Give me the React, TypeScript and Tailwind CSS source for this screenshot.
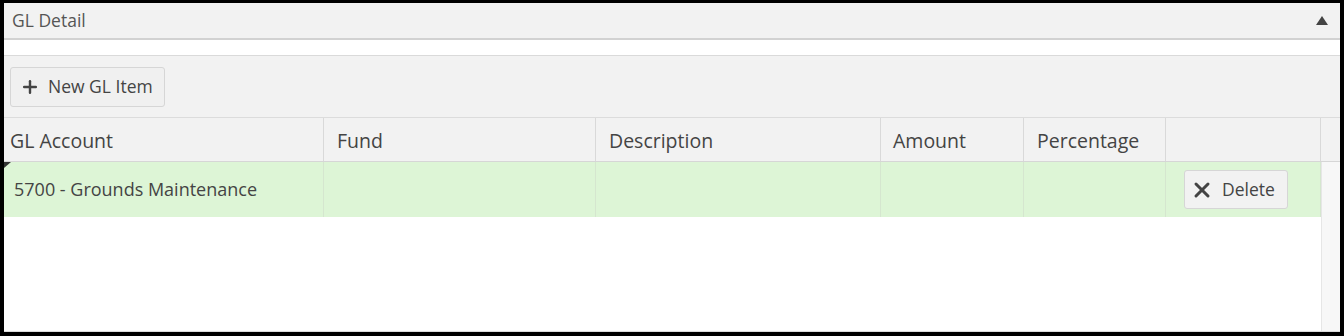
import { Plus, X } from 'lucide-react';

const columns = [
  { label: 'GL Account', width: 'w-[320px]', pad: 'pl-[6px]' },
  { label: 'Fund', width: 'w-[272px]', pad: 'pl-[13px]' },
  { label: 'Description', width: 'w-[285px]', pad: 'pl-[13px]' },
  { label: 'Amount', width: 'w-[143px]', pad: 'pl-[12px]' },
  { label: 'Percentage', width: 'w-[142px]', pad: 'pl-[13px]' },
  { label: '', width: 'w-[155px]', pad: 'pl-[13px]' },
];

export default function App() {
  return (
    <div className="h-[336px] w-[1344px] bg-black pt-[3px] pl-[4px] pr-[4px] pb-[4px] font-['Open_Sans',sans-serif]">
      <div className="flex h-full flex-col bg-white border-b border-[#dcdcdc]">
        {/* Panel header */}
        <div className="flex h-[37px] items-center justify-between border-b-2 border-[#d2d2d2] bg-[#f2f2f2] pl-[8px] pr-[12px]">
          <span className="text-[17.5px] text-[#555]">GL Detail</span>
          <svg viewBox="0 0 12 9" className="h-[9px] w-[12px]">
            <path d="M6 0 L12 9 L0 9 Z" fill="#444" />
          </svg>
        </div>

        <div className="h-[16px] border-b border-[#dadada] bg-white" />

        {/* Toolbar */}
        <div className="flex h-[62px] items-center border-b border-[#dcdcdc] bg-[#f2f2f2] pl-[6px]">
          <button className="flex h-[40px] items-center gap-[8px] rounded-[3px] border border-[#d6d6d6] bg-[#f0f0f0] pl-[9px] pr-[11px] text-[17.5px] text-[#444]">
            <Plus className="h-[20px] w-[20px]" strokeWidth={2.9} />
            <span>New GL Item</span>
          </button>
        </div>

        {/* Grid header */}
        <div className="flex h-[44px] border-b border-[#d6d6d6] bg-[#f2f2f2]">
          {columns.map((c, i) => (
            <div
              key={i}
              className={`${c.width} ${c.pad} flex shrink-0 items-center border-r border-[#d9d9d9] pt-[2px] text-[19.5px] text-[#444]`}
            >
              {c.label}
            </div>
          ))}
          <div className="flex-1" />
        </div>

        {/* Grid body */}
        <div className="flex flex-1">
          <div className="flex-1">
            <div className="relative flex h-[55px] bg-[#ddf5d6]">
              <div className="absolute left-0 top-0 h-0 w-0 border-t-[6px] border-r-[7px] border-t-[#333] border-r-transparent" />
              {columns.map((c, i) => (
                <div
                  key={i}
                  className={`${c.width} flex shrink-0 items-center border-r border-[#d5e6cf] text-[18px] text-[#444] ${i === 0 ? 'pl-[10px]' : ''} ${i === 5 ? 'pl-[18px]' : ''}`}
                >
                  {i === 0 && '5700 - Grounds Maintenance'}
                  {i === 5 && (
                    <button className="flex h-[39px] items-center gap-[8px] rounded-[3px] border border-[#d6d6d6] bg-[#f2f2f2] pl-[5px] pr-[12px] text-[17.5px] text-[#444]">
                      <X className="h-[24px] w-[24px]" strokeWidth={3} />
                      <span>Delete</span>
                    </button>
                  )}
                </div>
              ))}
            </div>
          </div>
          <div className="w-[19px] border-l border-[#e6e6e6] bg-[#f7f7f7]" />
        </div>
      </div>
    </div>
  );
}
